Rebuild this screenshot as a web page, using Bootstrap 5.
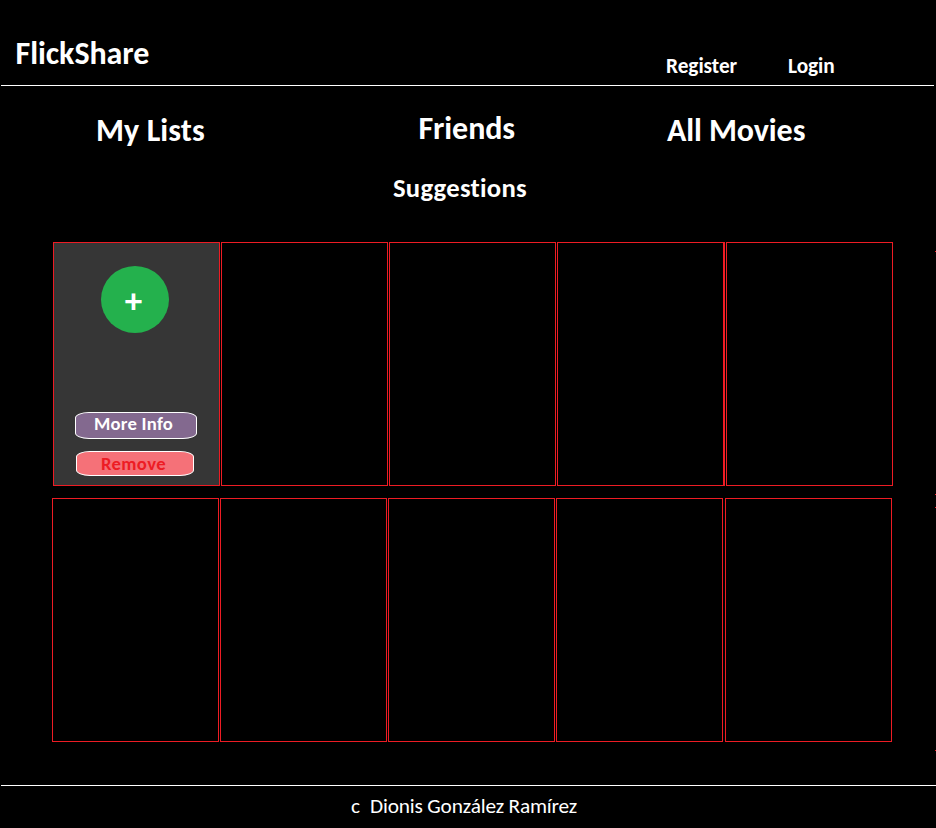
<!DOCTYPE html>
<html lang="en">
<head>
<meta charset="utf-8">
<meta name="viewport" content="width=device-width, initial-scale=1">
<title>FlickShare</title>
<link href="https://cdn.jsdelivr.net/npm/bootstrap@5.3.0/dist/css/bootstrap.min.css" rel="stylesheet">
<style>
body{background:#000;color:#fff;font-family:Carlito,Lato,sans-serif;font-variant-ligatures:none;width:936px;height:828px;overflow:hidden}
a{color:inherit;text-decoration:none;white-space:nowrap}
a:hover{color:inherit}
.topbar{height:86px;margin:0 2px 0 1px;border-bottom:1px solid #fff}
.brand{font-size:32px;line-height:34px;margin:37px 0 0 14.5px;letter-spacing:-.05px}
.account{font-size:21.33px;line-height:22px;margin-top:55px;letter-spacing:-.05px}
.register{width:122px}
.login{width:146px}
.sections{height:74px;font-size:32px;line-height:34px}
.my-lists{margin:28px 0 0 96px;width:322.5px;letter-spacing:.1px}
.friends{margin-top:26px;width:248.5px;letter-spacing:-.1px}
.all-movies{margin-top:28px;letter-spacing:-.1px}
.sugg{font-size:26.67px;line-height:28px;height:82px;padding:14px 0 0 393px;letter-spacing:.27px}
.movies{height:244px;padding-left:53px;gap:1px}
.movies.second{padding-left:52px;margin-top:12px}
.poster{width:167px;height:244px;border:1px solid #ed1c24;flex:none}
.thick{width:168px;border-right-width:2px}
.wide-gap{margin-left:1px}
.chosen{background:#363636}
.add{width:68px;height:67px;border-radius:50%;background:#24b14d;margin:23px 0 0 47px;font-size:35px;line-height:71px;padding-right:3px}
.pill{border:1px solid #fff;border-radius:14px/6px;font-size:18.67px}
.info{width:122px;height:27px;margin:79px 0 0 21px;background:#83698f;line-height:22px;padding-left:18px;letter-spacing:.25px}
.remove{width:118px;height:25px;margin:12px 0 0 22px;background:#f57178;color:#ed1c24;line-height:23px;padding-left:24px;letter-spacing:.35px}
.remove:hover{color:#ed1c24}
.foot{margin:43px 0 0 1px;height:43px;border-top:1px solid #fff;font-size:21.33px;line-height:22px;padding:9px 0 0 350px;white-space:nowrap;letter-spacing:-.17px}
.foot-c{width:19px}
.speck{position:absolute;left:935px;width:1px;height:1px;background:#ed1c24}
.speck-1{top:251px}.speck-2{top:494px}.speck-3{top:507px}.speck-4{top:750px}
</style>
<script src="https://cdn.jsdelivr.net/npm/bootstrap@5.3.0/dist/js/bootstrap.bundle.min.js"></script>
</head>
<body class="position-relative m-0">
<header class="topbar d-flex">
<a class="brand fw-bold" href="#">FlickShare</a>
<nav class="account d-flex fw-bold ms-auto"><a class="register" href="#">Register</a><a class="login" href="#">Login</a></nav>
</header>
<nav class="sections d-flex fw-bold">
<a class="my-lists" href="#">My Lists</a><a class="friends" href="#">Friends</a><a class="all-movies" href="#">All Movies</a>
</nav>
<main>
<h1 class="sugg fw-bold m-0">Suggestions</h1>
<section class="movies d-flex">
<article class="poster chosen">
<a class="add d-flex justify-content-center fw-bold" href="#"><span>+</span></a>
<a class="pill info d-block fw-bold" href="#">More Info</a>
<a class="pill remove d-block fw-bold" href="#">Remove</a>
</article>
<article class="poster"></article><article class="poster"></article><article class="poster thick"></article><article class="poster"></article>
</section>
<section class="movies second d-flex">
<article class="poster"></article><article class="poster"></article><article class="poster"></article><article class="poster"></article><article class="poster wide-gap"></article>
</section>
</main>
<footer class="foot d-flex"><span class="foot-c">c</span><span>Dionis González Ramírez</span></footer>
<i class="speck speck-1"></i><i class="speck speck-2"></i><i class="speck speck-3"></i><i class="speck speck-4"></i>
</body>
</html>
